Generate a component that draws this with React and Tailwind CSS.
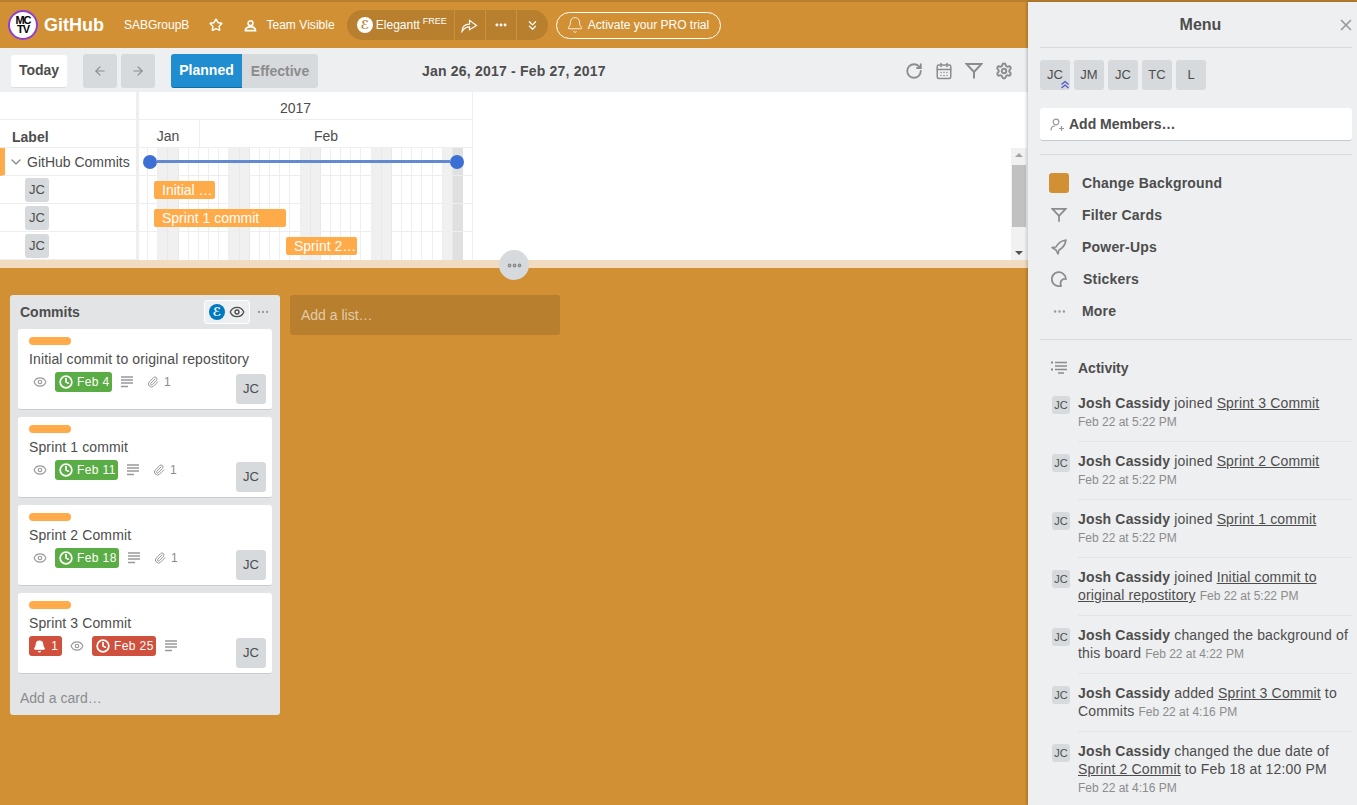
import { ArrowLeft, ArrowRight, Bell, CalendarDays, ChevronDown, ChevronsDown, Clock, Eye, Paperclip, Star, X, RotateCw, Settings, MoreHorizontal } from 'lucide-react';

const cards = [
  { title: 'Initial commit to original repostitory', due: 'Feb 4', clip: true, dueW: 'w-[57px]' },
  { title: 'Sprint 1 commit', due: 'Feb 11', clip: true, dueW: 'w-[63px]' },
  { title: 'Sprint 2 Commit', due: 'Feb 18', clip: true, dueW: 'w-[64px]' },
  { title: 'Sprint 3 Commit', due: 'Feb 25', late: true, dueW: 'w-[64px]' },
];

const link = 'underline whitespace-nowrap';

const activity = [
  { text: <>joined <span className={link}>Sprint 3 Commit</span></>, date: 'Feb 22 at 5:22 PM' },
  { text: <>joined <span className={link}>Sprint 2 Commit</span></>, date: 'Feb 22 at 5:22 PM' },
  { text: <>joined <span className={link}>Sprint 1 commit</span></>, date: 'Feb 22 at 5:22 PM' },
  { text: <>joined <span className="underline">Initial commit to original repostitory</span></>, date: 'Feb 22 at 5:22 PM' },
  { text: <>changed the background of this board</>, date: 'Feb 22 at 4:22 PM' },
  { text: <>added <span className={link}>Sprint 3 Commit</span> to Commits</>, date: 'Feb 22 at 4:16 PM' },
  { text: <>changed the due date of <span className={link}>Sprint 2 Commit</span> to Feb 18 at 12:00 PM</>, date: 'Feb 22 at 4:16 PM' },
];

// Jan 26 - Feb 27, weekends are shaded, index 31 is today
const days = Array.from({ length: 33 }, (_, i) => i);
const isWeekend = (i) => i % 7 === 2 || i % 7 === 3;

function LinesIcon({ className = '' }) {
  return (
    <svg viewBox="0 0 12 12" className={className} fill="none" stroke="#999" strokeWidth="1.4">
      <path d="M0 1h12M0 4h12M0 7h12M0 10.500h7" />
    </svg>
  );
}

function FunnelIcon({ className = '' }) {
  return (
    <svg viewBox="0 0 18 18" className={className} fill="none" stroke="#8c8c8c" strokeWidth="2">
      <path d="M1.500 2h15L9 10zM9 10v6.500" />
    </svg>
  );
}

function EleganttMark({ className = '' }) {
  return (
    <span className={`flex items-center justify-center rounded-full font-['DejaVu_Sans',serif] font-bold ${className}`}>
      ℰ
    </span>
  );
}

function Avatar({ label = 'JC', className = 'w-[30px] h-[30px] text-[13px]' }) {
  return (
    <div className={`flex shrink-0 items-center justify-center rounded-[3px] bg-[#d6dadc] text-[#4d4d4d] ${className}`}>
      {label}
    </div>
  );
}

function Card({ card }) {
  const dueColor = card.late ? 'bg-[#cf513d]' : 'bg-[#5aac44]';
  return (
    <div className="rounded-[3px] border-b border-[#ccc] bg-white pl-[11px] pr-[6px] pt-2 pb-[5px]">
      <div className="h-2 w-[42px] rounded-[4px] bg-[#ffab4a]" />
      <div className="mt-[5px] h-[18px] text-[14px] leading-[18px] tracking-[0.12px] text-[#4d4d4d]">{card.title}</div>
      <div className="mt-1 flex items-start justify-between">
        <div className="flex items-center">
          {card.late && (
            <div className="mr-[8px] flex h-5 w-[33px] items-center justify-center gap-[5px] rounded-[3px] bg-[#cf513d] text-[12px] text-white">
              <Bell size={13} fill="white" strokeWidth={2} />1
            </div>
          )}
          <Eye size={14} className={card.late ? 'mr-[8px] text-[#999]' : 'ml-[4px] mr-[8px] text-[#999]'} />
          <div className={`flex h-5 items-center gap-[4px] rounded-[3px] pl-[4px] text-[12px] tracking-[0.4px] text-white ${dueColor} ${card.dueW}`}>
            <Clock size={14} strokeWidth={3} />
            {card.due}
          </div>
          <LinesIcon className="ml-[9px] h-[12px] w-[12px]" />
          {card.clip && (
            <div className="ml-[14px] flex items-center gap-[5px] text-[12px] text-[#8c8c8c]">
              <Paperclip size={12} className="text-[#999]" />1
            </div>
          )}
        </div>
        <Avatar className="mt-[2px] h-[30px] w-[30px] text-[13px]" />
      </div>
    </div>
  );
}

function Header() {
  return (
    <div className="flex h-[46px] items-center bg-[#d29034] pl-2 text-white">
      <div className="flex h-[30px] w-[30px] shrink-0 flex-col items-center justify-center rounded-full border-2 border-[#8e3fd0] bg-white text-[11px] leading-[9px] font-bold tracking-[-1px] text-black">
        <span>MC</span>
        <span>TV</span>
      </div>
      <span className="ml-[6px] text-[18px] font-bold">GitHub</span>
      <span className="ml-5 text-[12px]">SABGroupB</span>
      <Star size={14} strokeWidth={2.4} className="ml-[20px]" />
      <svg viewBox="0 0 14 14" className="ml-[21px] h-[13px] w-[13px]" fill="none" stroke="white" strokeWidth="1.7">
        <circle cx="7" cy="4.500" r="2.600" />
        <path d="M1.500 12.500c0-3 2-4 5.500-4s5.500 1 5.500 4z" />
      </svg>
      <span className="ml-[9px] text-[12px] tracking-[0.05px]">Team Visible</span>
      <div className="ml-[12px] flex h-[30px] w-[201px] items-center rounded-[15px] bg-[#b87f2e] text-[13px]">
        <div className="flex h-full w-[108px] items-center border-r border-[#d29034] pl-[10px]">
          <EleganttMark className="h-4 w-4 bg-white text-[12px] text-[#b87f2e]" />
          <span className="ml-[3px] text-[12px]">Elegantt</span>
          <sup className="ml-[3px] text-[9px]">FREE</sup>
        </div>
        <div className="flex h-full w-[31px] items-center justify-center border-r border-[#d29034]">
          <svg viewBox="0 0 18 16" className="h-[15px] w-[17px]" fill="none" stroke="white" strokeWidth="1.2">
            <path d="M1 14.500c0-5 2.500-8 8-8V2.500l7.500 5.500L9 12.500V9.500c-4 0-6 1.500-8 5z" />
          </svg>
        </div>
        <div className="flex h-full w-[31px] items-center justify-center border-r border-[#d29034]">
          <MoreHorizontal size={14} strokeWidth={3} />
        </div>
        <div className="flex h-full w-[31px] items-center justify-center">
          <ChevronsDown size={15} strokeWidth={2} />
        </div>
      </div>
      <div className="ml-2 flex h-[27px] w-[165px] items-center rounded-[14px] border border-white pl-[9px] text-[12px]">
        <Bell size={18} strokeWidth={1.1} />
        <span className="ml-[4px]">Activate your PRO trial</span>
      </div>
    </div>
  );
}

function Toolbar() {
  return (
    <div className="flex h-[44px] items-center bg-[#edeff0] pt-[2px] pl-[11px] pr-[15px]">
      <div className="flex h-[33px] w-[56px] items-center justify-center rounded-[3px] border-b border-[#ddd] bg-white text-[14px] font-bold text-[#4d4d4d]">
        Today
      </div>
      <div className="ml-4 flex h-[34px] w-[34px] items-center justify-center rounded-[3px] bg-[#d6dadc] text-[#8c8c8c]">
        <ArrowLeft size={14} />
      </div>
      <div className="ml-1 flex h-[34px] w-[34px] items-center justify-center rounded-[3px] bg-[#d6dadc] text-[#8c8c8c]">
        <ArrowRight size={14} />
      </div>
      <div className="ml-4 flex h-[34px] w-[71px] items-center justify-center rounded-l-[3px] border-b border-[#0c6ea8] bg-[#1f8dd0] text-[14px] font-bold text-white">
        Planned
      </div>
      <div className="flex h-[34px] w-[76px] items-center justify-center rounded-r-[3px] bg-[#d6dadc] text-[14px] font-bold text-[#8c8c8c]">
        Effective
      </div>
      <div className="ml-[104px] text-[14px] font-bold tracking-[0.2px] text-[#4d4d4d]">Jan 26, 2017 - Feb 27, 2017</div>
      <div className="ml-auto flex items-center gap-[12px] text-[#8c8c8c]">
        <RotateCw size={18} strokeWidth={2.4} />
        <CalendarDays size={18} strokeWidth={2} />
        <FunnelIcon className="h-[18px] w-[18px]" />
        <Settings size={18} strokeWidth={2.6} />
      </div>
    </div>
  );
}

function LabelRow({ children }) {
  return <div className="flex h-[28px] items-center border-b border-[#eee] pl-[25px]">{children}</div>;
}

function TaskBar({ label, className }) {
  return (
    <div className={`flex h-[18px] items-center rounded-[2px] bg-[#ffab4a] pl-2 pt-px text-[14px] whitespace-nowrap text-white ${className}`}>
      {label}
    </div>
  );
}

function Gantt() {
  return (
    <div className="flex h-[168px] bg-white">
      <div className="w-[136px] shrink-0">
        <div className="h-[28px] border-b border-[#eee]" />
        <div className="flex h-[28px] items-center border-b border-[#eee] pl-3 pt-[7px] text-[14px] font-bold text-[#4d4d4d]">Label</div>
        <div className="flex h-[28px] items-center border-b border-[#eee] border-l-[5px] border-l-[#ffab4a] pl-[3px] pt-px text-[14px] text-[#4d4d4d]">
          <ChevronDown size={16} className="text-[#8c8c8c]" />
          <span className="ml-[3px] whitespace-nowrap">GitHub Commits</span>
        </div>
        <LabelRow><Avatar className="h-6 w-6 text-[13px]" /></LabelRow>
        <LabelRow><Avatar className="h-6 w-6 text-[13px]" /></LabelRow>
        <LabelRow><Avatar className="h-6 w-6 text-[13px]" /></LabelRow>
      </div>
      <div className="h-[170px] w-[3px] shrink-0 bg-[#eee]" />
      <div className="w-[334px] shrink-0 overflow-hidden">
        <div className="flex h-[28px] items-center justify-center border-r border-b border-[#eee] pt-[6px] pr-[20px] text-[14px] text-[#4d4d4d]">2017</div>
        <div className="flex h-[28px] border-r border-b border-[#eee] text-[14px] text-[#4d4d4d]">
          <div className="flex w-[61px] items-center justify-center border-r border-[#eee] pt-[6px] pr-[2px]">Jan</div>
          <div className="flex flex-1 items-center justify-center pt-[6px] pr-[20px]">Feb</div>
        </div>
        <div className="relative h-[112px]">
          <div className="absolute inset-y-0 -left-px flex w-[335px]">
            {days.map((i) => (
              <div
                key={i}
                className={`flex-1 border-r ${i === 31 ? 'border-[#e0e0e0] bg-[#e0e0e0]' : isWeekend(i) ? 'border-[#e8e8e8] bg-[#f0f0f0]' : 'border-[#eee]'}`}
              />
            ))}
          </div>
          <div className="relative">
            <div className="flex h-[28px] items-center border-b border-[#eee] pl-[4px]">
              <div className="h-[14px] w-[14px] shrink-0 rounded-full bg-[#3b6fd4]" />
              <div className="h-[3px] w-[293px] shrink-0 bg-[#6289d2]" />
              <div className="h-[14px] w-[14px] shrink-0 rounded-full bg-[#3b6fd4]" />
            </div>
            <div className="flex h-[28px] items-center border-b border-[#eee]">
              <TaskBar label="Initial …" className="ml-[15px] w-[61px]" />
            </div>
            <div className="flex h-[28px] items-center border-b border-[#eee]">
              <TaskBar label="Sprint 1 commit" className="ml-[15px] w-[132px]" />
            </div>
            <div className="flex h-[28px] items-center">
              <TaskBar label="Sprint 2…" className="ml-[147px] w-[71px]" />
            </div>
          </div>
        </div>
      </div>
      <div className="ml-auto mt-[56px] mr-px flex h-[112px] w-[16px] flex-col items-center justify-between bg-[#f1f1f1] py-[5px]">
        <div className="h-0 w-0 border-x-[4px] border-b-[4px] border-x-transparent border-b-[#a3a3a3]" />
        <div className="mb-[2px] mt-[-1px] h-[62px] w-[14px] bg-[#c1c1c1]" />
        <div className="mt-[14px] h-0 w-0 border-x-[4px] border-t-[4px] border-x-transparent border-t-[#505050]" />
      </div>
    </div>
  );
}

function Splitter() {
  return (
    <div className="relative h-[8px] bg-[#f1dcc1]">
      <div className="absolute left-[499px] top-[-10px] flex h-[30px] w-[30px] items-center justify-center rounded-full bg-[#d6dadc] text-[#8c8c8c]">
        <MoreHorizontal size={17} strokeWidth={3.4} />
      </div>
    </div>
  );
}

function Board() {
  return (
    <div className="flex min-h-0 flex-1 items-start gap-[10px] bg-[#d29034] pl-[10px] pt-[27px]">
      <div className="h-[420px] w-[270px] rounded-[3px] bg-[#e2e4e6] px-2">
        <div className="flex h-[34px] items-center pl-[2px]">
          <span className="text-[14px] font-bold text-[#4d4d4d]">Commits</span>
          <div className="ml-auto flex h-[24px] w-[46px] items-center justify-center gap-[4px] rounded-[3px] border border-white bg-[#edeff0]">
            <EleganttMark className="h-4 w-4 bg-[#0079bf] text-[12px] text-white" />
            <Eye size={16} fill="#edeff0" strokeWidth={2} className="text-[#4d4d4d]" />
          </div>
          <MoreHorizontal size={14} className="ml-[6px] mr-[2px] text-[#999]" />
        </div>
        <div className="flex flex-col gap-[7px]">
          {cards.map((card) => <Card key={card.title} card={card} />)}
        </div>
        <div className="mt-[15px] pl-[2px] text-[14px] leading-[18px] text-[#8c8c8c]">Add a card…</div>
      </div>
      <div className="flex h-[40px] w-[270px] items-center rounded-[3px] bg-[#b87f2e] pl-[11px] text-[14px] text-white/60">
        Add a list…
      </div>
    </div>
  );
}

function MenuItem({ icon, label, labelClass = '' }) {
  return (
    <div className="flex h-[32px] items-center pl-[9px] text-[14px] font-bold tracking-[0.2px] text-[#4d4d4d]">
      <div className="flex w-[20px] items-center justify-center">{icon}</div>
      <span className={`ml-[13px] ${labelClass}`}>{label}</span>
    </div>
  );
}

function Sidebar() {
  return (
    <div className="relative z-10 flex w-[329px] shrink-0 flex-col overflow-hidden bg-[#edeff0] pl-3 pr-[5px] shadow-[-1px_0_3px_rgba(0,0,0,0.25)]">
      <div className="flex h-[46px] shrink-0 items-center border-b border-[#d6dadc]">
        <div className="flex-1 pl-[24px] text-center text-[16px] font-bold text-[#4d4d4d]">Menu</div>
        <X size={18} strokeWidth={2.2} className="-mr-[3px] text-[#999]" />
      </div>
      <div className="mt-3 flex shrink-0 gap-1">
        <div className="relative">
          <Avatar />
          <svg viewBox="0 0 10 10" className="absolute bottom-0 left-[20px] h-[10px] w-[10px]" fill="none" stroke="#4a55c8" strokeWidth="1.2">
            <path d="M1.500 4.500 5 1.500l3.500 3M1.500 8 5 5l3.500 3" />
          </svg>
        </div>
        <Avatar label="JM" />
        <Avatar />
        <Avatar label="TC" />
        <Avatar label="L" />
      </div>
      <div className="mt-[18px] flex h-[33px] shrink-0 items-center rounded-[3px] border-b border-[#c4c9cc] bg-white pt-px pl-[10px] text-[14px] font-bold text-[#4d4d4d]">
        <svg viewBox="0 0 14 14" className="h-[14px] w-[14px]" fill="none" stroke="#999" strokeWidth="1.200">
          <circle cx="6" cy="4" r="2.800" />
          <path d="M1 12.500c0-3 1.500-4.500 4-4.500M9 10.500h5M11.500 8v5" />
        </svg>
        <span className="ml-[5px]">Add Members…</span>
      </div>
      <div className="mt-[13px] shrink-0 border-t border-[#d6dadc] pt-[12px] pb-[12px]">
        <MenuItem icon={<div className="h-5 w-5 rounded-[3px] bg-[#d29034]" />} label="Change Background" />
        <MenuItem icon={<FunnelIcon className="h-4 w-4" />} label="Filter Cards" />
        <MenuItem
          icon={
            <svg viewBox="0 0 16 16" className="h-4 w-4" fill="none" stroke="#8c8c8c" strokeWidth="1.600" strokeLinejoin="round">
              <path d="M15 1C9.500 2 6.500 5 5 8L1 8.500l4 2.500 2 4 1-4c3-1.500 6-4.500 7-10z" />
            </svg>
          }
          label="Power-Ups"
        />
        <MenuItem
          icon={
            <svg viewBox="0 0 16 16" className="h-4 w-4" fill="none" stroke="#8c8c8c" strokeWidth="1.800">
              <path d="M10 14.800A7 7 0 1 1 14.800 8C11 7.500 8.500 10.500 10 14.800z" />
            </svg>
          }
          label="Stickers"
          labelClass="ml-[14px]"
        />
        <MenuItem icon={<MoreHorizontal size={15} className="text-[#999]" />} label="More" />
      </div>
      <div className="flex h-[45px] shrink-0 items-start border-t border-[#d6dadc] pt-[18px] pl-[11px] text-[14px] leading-[20px] font-bold text-[#4d4d4d]">
        <svg viewBox="0 0 16 14" className="mt-[3px] h-[14px] w-[16px]" fill="none" stroke="#8c8c8c" strokeWidth="1.300">
          <path d="M4 1.500h12M4 5h12M4 8.500h12M7 12h6" />
          <path d="M0 1.500h2M0 8.500h2" strokeWidth="2" />
        </svg>
        <span className="ml-[11px]">Activity</span>
      </div>
      <div className="shrink-0 pl-3">
        {activity.map((entry, i) => (
          <div key={i} className="flex gap-2">
            <Avatar className="mt-[12px] h-[18px] w-[18px] text-[11px]" />
            <div className={`flex-1 pt-[10px] pb-[10px] text-[14px] leading-[18px] tracking-[0.16px] text-[#4d4d4d] ${i < 6 ? 'border-b border-[#e2e4e6]' : ''}`}>
              <span className="font-bold">Josh Cassidy</span> {entry.text}{' '}
              <span className="text-[12px] tracking-normal whitespace-nowrap text-[#8c8c8c]">{entry.date}</span>
            </div>
          </div>
        ))}
      </div>
    </div>
  );
}

export default function App() {
  return (
    <div className="flex h-[805px] w-[1357px] flex-col overflow-hidden bg-[#d29034] font-['Liberation_Sans',Arial,sans-serif]">
      <div className="h-[2px] shrink-0 bg-[#b87f2e]" />
      <div className="flex min-h-0 flex-1">
        <div className="flex w-[1028px] shrink-0 flex-col">
          <Header />
          <Toolbar />
          <Gantt />
          <Splitter />
          <Board />
        </div>
        <Sidebar />
      </div>
    </div>
  );
}
